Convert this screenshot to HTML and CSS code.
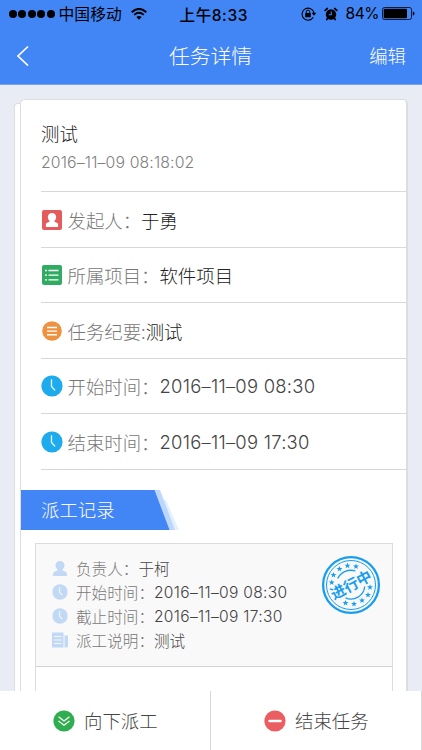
FILE: index.html
```
<!DOCTYPE html>
<html lang="zh-CN">
<head>
<meta charset="utf-8">
<meta name="viewport" content="width=device-width">
<title>任务详情</title>
<link rel="stylesheet" href="styles.css">
</head>
<body>
<svg class="defs" width="0" height="0">
  <defs>
    <symbol id="clock" viewBox="0 0 22 22"><circle cx="11" cy="11" r="10.6" fill="currentColor"/><path d="M10.5 4.8V11.5L13.7 15" fill="none" stroke="#fff" stroke-width="1.4" stroke-linecap="round" opacity=".85"/></symbol>
    <symbol id="person" viewBox="0 0 14 15"><path d="M7 0C4.300 0 2.500 1.800 2.500 4.300C2.500 6 3.300 7.700 4.600 8.700C4.600 10 1.800 10 .7 11.400C.1 12.200 0 13.500 0 15H14C14 13.500 13.900 12.200 13.300 11.400C12.200 10 9.400 10 9.400 8.700C10.700 7.700 11.500 6 11.500 4.300C11.500 1.800 9.700 0 7 0Z" fill="currentColor"/></symbol>
    <path id="star" d="M0-3.1L.8-1H3L1.200.4L1.900 2.600L0 1.300L-1.900 2.600L-1.200.4L-3-1H-.8Z"/>
  </defs>
</svg>
<div class="screen">
  <header>
    <div class="status">
      <div class="carrier"><i></i><i></i><i></i><i></i><i></i></div>
      <span class="operator">中国移动</span>
      <svg class="wifi" width="16" height="12" viewBox="0 0 16 12" fill="none" stroke="#000" stroke-width="1.900"><path d="M.7 4.200Q8-2.400 15.300 4.200M3.200 6.900Q8 2.600 12.800 6.900"/><path d="M5.300 9.100Q8 6.700 10.700 9.100L8 11.800Z" fill="#000" stroke="none"/></svg>
      <span class="clock-text">上午8:33</span>
      <svg class="lock" width="16" height="14" viewBox="0 0 16 14"><path d="M12.300 10.200A6 6 0 1 1 13 6" fill="none" stroke="#000" stroke-width="1.100"/><path d="M10.600 5.800H15.400L13 8.800Z"/><rect x="4.200" y="6" width="5.600" height="4.200" rx=".5"/><path d="M5.300 6V4.800a1.700 1.700 0 0 1 3.400 0V6" fill="none" stroke="#000" stroke-width="1"/></svg>
      <svg class="alarm" width="14" height="14" viewBox="0 0 14 14"><circle cx="7" cy="7.500" r="5.200"/><path d="M1.200 3.400L3.300 1.500M12.800 3.400L10.700 1.500M3.600 11.300L2.800 12.500M10.400 11.300L11.200 12.500" stroke="#000" stroke-width="1.700" stroke-linecap="round"/><path d="M7.300 4.500V7.800H4.700" fill="none" stroke="#4285f4" stroke-width="1.100"/></svg>
      <span class="percent">84%</span>
      <svg class="battery" width="33" height="13" viewBox="0 0 33 13"><rect x=".5" y=".5" width="29" height="12" rx="2" fill="none" stroke="#000" stroke-width=".8"/><rect x="1.700" y="1.700" width="23.300" height="9.600" rx="1"/><path d="M30.800 4.300Q32.500 5 32.500 6.500T30.800 8.700Z"/></svg>
    </div>
    <nav>
      <svg width="14" height="22" viewBox="0 0 14 22"><path d="M13 2.500L3 12L13 21.500" fill="none" stroke="#fff" stroke-width="1.700"/></svg>
      <h1>任务详情</h1>
      <span class="edit">编辑</span>
    </nav>
  </header>
  <main>
    <div class="back-card"></div>
    <section class="card">
      <div class="head"><h2>测试</h2><time>2016–11–09 08:18:02</time></div>
      <div class="row"><svg width="20" height="20" viewBox="0 0 20 20"><rect width="20" height="20" rx="2" fill="#e45b5c"/><svg x="3.500" y="3" width="13" height="14" color="#fff"><use href="#person"/></svg></svg><span class="label">发起人：</span><span class="value">于勇</span></div>
      <div class="row"><svg width="20" height="20" viewBox="0 0 20 20"><rect width="20" height="20" rx="2" fill="#30ab62"/><path d="M3 5.500H5M3 10.200H5M3 14.900H5M6.500 5.500H16.500M6.500 10.200H16.500M6.500 14.900H16.500" stroke="#fff" stroke-width="1.300"/></svg><span class="label">所属项目：</span><span class="value">软件项目</span></div>
      <div class="row"><svg width="20" height="20" viewBox="0 0 20 20"><circle cx="10" cy="10" r="9.800" fill="#ef9240"/><path d="M5 6.500H15M5 10.100H15M5 13.700H15" stroke="#fff" stroke-width="1.400"/></svg><span class="label">任务纪要:</span><span class="value">测试</span></div>
      <div class="row"><svg class="time-icon" width="22" height="22"><use href="#clock"/></svg><span class="label">开始时间：</span><span class="value date">2016–11–09 08:30</span></div>
      <div class="row"><svg class="time-icon" width="22" height="22"><use href="#clock"/></svg><span class="label">结束时间：</span><span class="value date">2016–11–09 17:30</span></div>
      <div class="banner"><svg width="160" height="40" viewBox="0 0 160 40"><path d="M136 10H145L158 40H140Z" fill="#e4efff"/><path d="M130 0H139L154 40H140Z" fill="#bcd7ff"/><path d="M0 0H133.500L148.500 40H0Z" fill="#4285f4"/></svg><h3>派工记录</h3></div>
      <div class="records">
        <article class="record">
          <div class="item"><svg width="14" height="15"><use href="#person"/></svg><span class="label">负责人：</span><span class="value">于柯</span></div>
          <div class="item"><svg width="16" height="16"><use href="#clock"/></svg><span class="label">开始时间：</span><span class="value date">2016–11–09 08:30</span></div>
          <div class="item"><svg width="16" height="16"><use href="#clock"/></svg><span class="label">截止时间：</span><span class="value date">2016–11–09 17:30</span></div>
          <div class="item"><svg width="16" height="16" viewBox="0 0 16 16"><path d="M0 .5H11.500V15.500H0ZM12.500 3.500H16V14Q16 15.500 14 15.500H12.500Z" fill="currentColor"/><path d="M2 4.500H9.500M2 8H9.500M2 11.500H9.500" stroke="#f4f8fd"/></svg><span class="label">派工说明：</span><span class="value">测试</span></div>
          <svg class="stamp" width="60" height="60" viewBox="-30 -30 60 60">
            <g fill="none" stroke="#199df0"><circle r="27.900" stroke-width="2.300"/><circle r="24.500" stroke-width="1"/><path d="M-13.300-6.500A14.800 14.800 0 0 1 4.500-14M13.700 1.500A13.700 13.700 0 0 1-5.500 12.800" stroke-width="1.300"/></g>
            <g fill="#199df0">
              <use href="#star" x="-19.300" y="-2.500"/><use href="#star" x="-17.500" y="-10"/><use href="#star" x="-11.500" y="-16"/><use href="#star" x="-3.500" y="-19.300"/><use href="#star" x="5" y="-18.500"/>
              <use href="#star" x="19" y="2.300"/><use href="#star" x="17" y="10"/><use href="#star" x="11" y="15.500"/><use href="#star" x="3" y="19"/><use href="#star" x="-5.500" y="18"/>
              <text transform="rotate(-28)" x="0" y="5.300" text-anchor="middle">进行中</text>
            </g>
          </svg>
        </article>
      </div>
    </section>
  </main>
  <footer>
    <div class="action"><svg width="22" height="22" viewBox="0 0 22 22"><circle cx="11" cy="11" r="10.600" fill="#30ad4f"/><path d="M5.500 6.800L11 11L16.500 6.800M5.500 11L11 15.200L16.500 11" fill="none" stroke="#fff" stroke-width="1.200"/></svg><span>向下派工</span></div>
    <div class="action"><svg width="22" height="22" viewBox="0 0 22 22"><circle cx="11" cy="11" r="10.600" fill="#ea5d60"/><path d="M5.500 11H16.500" stroke="#fff" stroke-width="2.400" stroke-linecap="round"/></svg><span>结束任务</span></div>
  </footer>
</div>
</body>
</html>
```
FILE: styles.css
```
* { box-sizing: border-box; margin: 0; padding: 0; }
body { font-family: "Noto Sans CJK SC", sans-serif; font-weight: 300; background: #e9ecf4; }
svg { display: block; flex: none; }
.defs { position: absolute; }
h1, h2, h3 { font-weight: 300; }
.screen { width: 422px; height: 750px; display: flex; flex-direction: column; overflow: hidden; white-space: nowrap; }
header { height: 85px; flex: none; background: #4285f4; border-bottom: 1px solid #7ba5ea; }
.status { height: 27px; display: flex; align-items: center; padding: 0 7px 0 9px; color: #000; }
.carrier { display: flex; gap: 1.4px; }
.carrier i { width: 8px; height: 8px; border-radius: 50%; background: #000; }
.operator { font-size: 15.800px; margin-left: 4px; width: 64px; font-weight: 400; }
.wifi { margin-left: 8px; }
.clock-text { font-family: Inter, "Noto Sans CJK SC", sans-serif; font-size: 15.500px; font-weight: 500; letter-spacing: .6px; margin-left: 33px; width: 73px; }
.lock { margin-left: 48px; }
.alarm { margin-left: 7px; }
.percent { font-family: Inter, sans-serif; font-size: 15.500px; font-weight: 400; margin-left: 8px; width: 33px; letter-spacing: -.5px; }
.battery { margin-left: 3px; }
nav { height: 56px; display: grid; grid-template-columns: 100px 1fr 100px; align-items: center; padding: 0 16px 0 15px; color: #fff; }
h1 { font-size: 20.800px; text-align: center; line-height: 30px; }
.edit { font-size: 18.400px; text-align: right; }
main { flex: 1; min-height: 0; overflow: hidden; display: grid; grid-template-columns: 14px 7px 387px; align-content: start; }
.back-card { grid-column: 2; margin-top: 18px; height: 660px; background: #fff; border: 1px solid #dcdde2; border-right: 0; border-radius: 4px 0 0 0; }
.card { grid-column: 3; margin: 14px 0 0 -1px; height: 660px; background: #fff; border: 1px solid #dcdde0; border-width: 1px 2px 0 1px; border-radius: 5px 5px 0 0; }
.head { height: 92px; margin-left: 20px; padding-top: 19px; border-bottom: 1px solid #d8d8d8; }
h2 { font-size: 18.400px; line-height: 28px; color: #222; }
time { display: block; font-family: Inter, sans-serif; font-size: 15.800px; line-height: 31px; letter-spacing: .14px; color: #808080; }
.row { height: 55.500px; margin-left: 20px; padding-top: 1px; display: flex; align-items: center; border-bottom: 1px solid #d8d8d8; font-size: 18.400px; color: #1eabed; }
.row > svg { margin: 0 5.500px 0 1px; }
.row > .time-icon { margin: 0 4.500px 0 0; }
.label { color: #777; }
.value { color: #222; }
.date { font-family: Inter, sans-serif; letter-spacing: .26px; color: #444; }
.banner { height: 40px; margin-top: 20px; display: grid; align-items: center; }
.banner > * { grid-area: 1 / 1; }
.banner h3 { padding: 0 0 2px 20px; color: #fff; font-size: 18.400px; z-index: 1; }
.records { margin: 13px 13px 0 14px; height: 160px; border: 1px solid #dcdcdc; }
.record { height: 123px; padding: 13px 0 0 16px; background: #f9f9f9; border-bottom: 1px solid #d3d3d3; position: relative; font-size: 15.600px; color: #c1d9f5; }
.item { display: grid; grid-template-columns: 16px auto auto; justify-content: start; align-items: center; height: 23.900px; }
.item svg { justify-self: center; }
.item .label { margin-left: 8px; }
.item .value { color: #444; }
.item .date { letter-spacing: .3px; }
.stamp { position: absolute; right: 11px; top: 11px; }
.stamp text { font-size: 14.800px; font-weight: 700; }
footer { height: 59px; flex: none; display: grid; grid-template-columns: 211px 211px; background: #fff; }
.action { display: flex; align-items: center; padding-left: 53px; gap: 9px; border-right: 1px solid #d8d8d8; font-size: 18.400px; color: #444; }
.action span { margin-top: -2px; }
```
